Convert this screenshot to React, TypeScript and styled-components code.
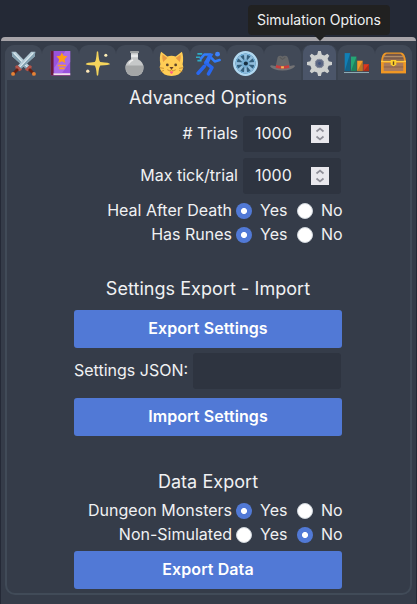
import React from "react";
import styled, { createGlobalStyle } from "styled-components";

const Global = createGlobalStyle`
  * { box-sizing: border-box; }
  body { margin: 0; background: #242936; color: #f0f1f3; font: 400 16px/24px Inter, sans-serif; }
  button, input { font: inherit; color: inherit; border: 0; margin: 0; }
`;
const Page = styled.main`
  height: 604px; padding: 37px 1px 0; overflow: hidden;
`;
const Card = styled.section`
  height: 567px; border-top: 4px solid #a6a3a8; border-radius: 4px 4px 0 0;
  background: #353c49; padding: 4px;
`;
const Frame = styled.div`
  width: 407px; height: 550px; border: 2px solid #414b58; border-top: 0;
  border-radius: 10px; display: flex; flex-direction: column; align-items: center;
`;
const Tabs = styled.nav`
  display: flex; width: 407px; height: 35px; flex: none;
`;
const Tab = styled.button<{ $active?: boolean }>`
  width: 37px; height: 35px; padding: 1px 0 0; display: flex; align-items: center; justify-content: center;
  border-radius: 9px 9px 0 0;
  background: ${p => (p.$active ? "#4b5569" : "#414957")};
  border: solid #3b4350; border-width: 0 ${p => (p.$active ? "2px" : "0")};
  svg { width: 25px; height: 25px; display: block; flex: none; }
`;
const Tip = styled.div`
  position: absolute; left: 248px; top: 5px; width: 142px; height: 30px; border-radius: 4px;
  background: #212121; font-size: 14px; line-height: 30px; text-align: center; z-index: 1;
  &::after { content: ""; position: absolute; left: 66px; top: 30px; border: 6px solid transparent; border-bottom: 0; border-top-color: #212121; }
`;
const Body = styled.div`
  width: 268px; margin-right: 1px; padding-top: 5px; display: flex; flex-direction: column;
`;
const Title = styled.h2<{ $gap?: number }>`
  margin: ${p => p.$gap || 0}px 0 0; font-size: 18px; line-height: 26px; font-weight: 400;
  text-align: center; white-space: nowrap; letter-spacing: 0.05px;
`;
const FieldRow = styled.label<{ $top?: number }>`
  display: flex; justify-content: flex-end; align-items: center; gap: 5px; height: 36px;
  margin-top: ${p => p.$top ?? 6}px; padding-right: 1px; white-space: nowrap;
`;
const FieldLabel = styled.span` padding-bottom: 2px; `;
const Field = styled.div<{ $width: number }>`
  width: ${p => p.$width}px; height: 36px; border-radius: 3px; background: #2e3440;
  display: flex; align-items: center; justify-content: space-between; padding: 0 12px;
`;
const NumberInput = styled.input`
  width: 52px; background: none; padding: 0 0 2px; outline: 0;
`;
const Spinner = styled.svg`
  width: 18px; height: 18px; background: #e9e8ed; flex: none;
`;
const RadioRow = styled.div<{ $top?: number }>`
  display: grid; grid-template-columns: 158px 16px 45px 16px 33px; height: 24px;
  align-items: center; white-space: nowrap; margin-top: ${p => p.$top || 0}px;
`;
const RadioLabel = styled.span` text-align: right; `;
const Choice = styled.span` padding-left: 12px; `;
const Radio = styled.span<{ $on: boolean }>`
  width: 16px; height: 16px; border-radius: 50%; margin: 1px 0 0 4px;
  background: ${p => (p.$on ? "radial-gradient(circle, #fff 2.7px, #5179d6 3.3px)" : "#fff")};
  ${p => (p.$on ? "" : "border: 1px solid #ced4da;")}
`;
const Button = styled.button<{ $top: number }>`
  width: 268px; height: 38px; border-radius: 3px; margin-top: ${p => p.$top}px; padding: 0 0 2px;
  background: #5179d6; color: #fff; font-weight: 600; line-height: 24px; letter-spacing: 0.08px;
`;

const icons: { name: string; art: React.ReactNode }[] = [
  { name: "Combat", art: <>
    {[false, true].map(f => <g key={String(f)} transform={f ? "translate(36 0) scale(-1 1)" : undefined}>
      <path d="M1 1h6l19 20-4 5L2 8z" fill="#b4cbd6" /><path d="M1 1l23 22-2 3L2 8z" fill="#84a1b0" /><path d="M4 3l19 20" stroke="#e0edf2" strokeWidth="1.5" />
      <path d="M20 27l7-7 3 2-1 4-5 3z" fill="#b3554b" /><path d="M26 26l6 6" stroke="#662113" strokeWidth="4" /><circle cx="33" cy="33" r="2.8" fill="#e78336" />
    </g>)}</> },
  { name: "Spells", art: <>
    <path d="M4 0h28v35H4z" fill="#9953dc" /><path d="M4 0h4v35H4z" fill="#661b38" /><path d="M8 32h24v3H8z" fill="#f1dfe9" /><path d="M6 35h26v1H6z" fill="#823078" />
    <path d="M25 0h7v16L20 32H9V24z" fill="#b579ee" opacity=".65" /><path d="M20 2l2.4 5 5.6.7-4 4 1 5.7-5-2.8-5 2.8 1-5.7-4-4 5.6-.7z" fill="#ff9e16" />
    <path d="M14 21h12M16 25h8" stroke="#ff9d20" strokeWidth="2.2" /></> },
  { name: "Prayers", art: <>
    <path d="M19 1q1 14 3 15 14 1 14 3-1 1-14 2-2 2-3 14-1 1-2 0-1-12-3-14-13-1-13-2 0-2 13-3 2-1 3-15 1-1 2 0z" fill="#f4d45c" />
    <circle cx="4" cy="29" r="2.4" fill="#ffe8b7" /><circle cx="30" cy="6" r="2.2" fill="#fff0b7" /></> },
  { name: "Potions", art: <>
    <path d="M13 3h10v9q8 4 8 12 0 12-13 12T5 24q0-8 8-12z" fill="#c6c8c9" /><path d="M5 21h26q1 15-13 15T5 21z" fill="#a4a6a7" />
    <rect x="11.5" width="13" height="3" rx="1" fill="#9ca0a2" /><path d="M13 5h10v4H13z" fill="#e7e9ea" /><path d="M10 18q2-4 6-5" stroke="#eee" strokeWidth="2" /></> },
  { name: "Pets", art: <>
    <path d="M3 1Q0 8 2 19q-2 4 0 8 4 9 16 9t16-9q2-4 0-8 2-11-1-18l-9 7q-6-2-12 0z" fill="#ffcd55" />
    <path d="M5 5q-1 5 1 11l6-6zM31 5q1 5-1 11l-6-6z" fill="#e79a42" />
    <circle cx="12" cy="20" r="2" fill="#5d452c" /><circle cx="24" cy="20" r="2" fill="#5d452c" />
    <path d="M15 23h6l-3 4z" fill="#654028" /><path d="M12 27q4 3 6 0 2 3 6 0M7 25l-6-1M7 28l-5 2M29 25l6-1M29 28l5 2" stroke="#b07528" /><path d="M16 29h4v2q-2 4-4 0z" fill="#ff5d85" /></> },
  { name: "Agility", art: <>
    <circle cx="31" cy="4.5" r="3.5" fill="#3e82fa" /><path d="M7 11l5-6h9M22 10l5 5 7-2" stroke="#317cfa" strokeWidth="3.7" strokeLinecap="round" strokeLinejoin="round" />
    <path d="M20 7l-5 10M14 17l9 7-5 9M12 22L3 32" stroke="#2867ee" strokeWidth="5" strokeLinecap="round" strokeLinejoin="round" />
    <path d="M19 4h6l-7 14-6-2z" fill="#2d70f5" /><path d="M2 4h7M0 9h6M2 14h6" stroke="#2fabc5" strokeWidth="2.5" /></> },
  { name: "Astrology", art: <>
    <circle cx="18" cy="18" r="16.2" fill="#345e7b" stroke="#b1d8f0" strokeWidth="3.5" /><circle cx="18" cy="18" r="13.5" stroke="#78b6df" strokeWidth="1.5" />
    {[0,45,90,135,180,225,270,315].map(a => <path key={a} transform={`rotate(${a} 18 18)`} d="M16.7 15l-1-11h4.6l-1 11z" fill="#91bddc" />)}
    <circle cx="18" cy="18" r="6" fill="#73abd0" /><circle cx="18.5" cy="18" r="3" fill="#172e40" /></> },
  { name: "Loot", art: <>
    <path d="M8 23l3-14q1-3 5-2 2 2 4 0 5-1 6 3l3 13z" fill="#666769" /><path d="M0 22q1-2 4-1 6 2 14 2t14-2q4-1 4 1-4 6-18 6T0 22z" fill="#737274" />
    <path d="M9 20q9 3 18 0l1 4q-10 3-20 0z" fill="#c93d3d" /><path d="M16 22h4v3h-4z" fill="#f3b951" /><path d="M14 9l4 3 4-3" stroke="#57585a" strokeWidth="1.5" /></> },
  { name: "Simulation Options", art: <>
    {[0,45,90,135,180,225,270,315].map(a => <path key={a} transform={`rotate(${a} 18 18)`} d="M14 8l2-8h4l2 8z" fill="#ced0cf" />)}
    <circle cx="18" cy="18" r="10" stroke="#ced0cf" strokeWidth="7" /><circle cx="18" cy="18" r="6" fill="#5c6682" stroke="#8c92a3" strokeWidth="1.5" /><circle cx="18" cy="18" r="2" fill="#40547c" /></> },
  { name: "Statistics", art: <>
    <path d="M0 31h36" stroke="#8eabb5" strokeWidth="1.5" />
    <path d="M1 3h8v26H1z" fill="#127fb5" /><path d="M10 8h8v21h-8z" fill="#25a675" /><path d="M19 14h8v15h-8z" fill="#f39b2a" /><path d="M28 19h8v10h-8z" fill="#de381d" />
    <path d="M9 3v26H1zM18 8v21h-8zM27 14v15h-8zM36 19v10h-8z" fill="#111" opacity=".25" /></> },
  { name: "Chest", art: <>
    <path d="M0 15Q1 3 7 2h22q6 1 7 13v17H0z" fill="#ee9725" /><path d="M3 15q0-8 5-11h20q5 3 5 11z" fill="#765849" /><path d="M4 8h28" stroke="#b18d68" strokeWidth="2" /><path d="M3 12h30" stroke="#a87b59" />
    <path d="M4 17h28v12H4z" fill="#aa7b5c" /><path d="M4 23h28" stroke="#795643" /><path d="M0 15h36" stroke="#ffc944" strokeWidth="2" /><path d="M0 30.5h36" stroke="#f19824" strokeWidth="3" />
    <path d="M14 13h8v6q-4 6-8 0z" fill="#ffd22e" /><path d="M18 15v5" stroke="#634621" strokeWidth="2" /></> },
];

function NumberField({ label, value, top }: { label: string; value: number; top?: number }) {
  return <FieldRow $top={top}><FieldLabel>{label}</FieldLabel><Field $width={98}>
    <NumberInput defaultValue={value} aria-label={label} />
    <Spinner viewBox="0 0 18 18" fill="none" stroke="#8f8f98" strokeWidth="1.7"><path d="M5.5 6.5L9 3.5l3.5 3M5.5 11.5L9 14.5l3.5-3" /></Spinner>
  </Field></FieldRow>;
}
function YesNo({ label, yes, top }: { label: string; yes: boolean; top?: number }) {
  return <RadioRow $top={top}>
    <RadioLabel>{label}</RadioLabel><Radio $on={yes} /><Choice>Yes</Choice><Radio $on={!yes} /><Choice>No</Choice>
  </RadioRow>;
}

export default function App() {
  return <><Global /><Page>
    <Tip role="tooltip">Simulation Options</Tip>
    <Card><Frame>
      <Tabs>{icons.map(({ name, art }) => <Tab key={name} aria-label={name} $active={name === "Simulation Options"}><svg viewBox="0 0 36 36" fill="none">{art}</svg></Tab>)}</Tabs>
      <Body>
        <Title>Advanced Options</Title>
        <NumberField label="# Trials" value={1000} top={5} />
        <NumberField label="Max tick/trial" value={1000} />
        <YesNo label="Heal After Death" yes top={4} />
        <YesNo label="Has Runes" yes />
        <Title $gap={30}>Settings Export - Import</Title>
        <Button $top={8}>Export Settings</Button>
        <FieldRow $top={5}><FieldLabel>Settings JSON:</FieldLabel><Field $width={148} /></FieldRow>
        <Button $top={9}>Import Settings</Button>
        <Title $gap={33}>Data Export</Title>
        <YesNo label="Dungeon Monsters" yes top={3} />
        <YesNo label="Non-Simulated" yes={false} />
        <Button $top={5}>Export Data</Button>
      </Body>
    </Frame></Card>
  </Page></>;
}
